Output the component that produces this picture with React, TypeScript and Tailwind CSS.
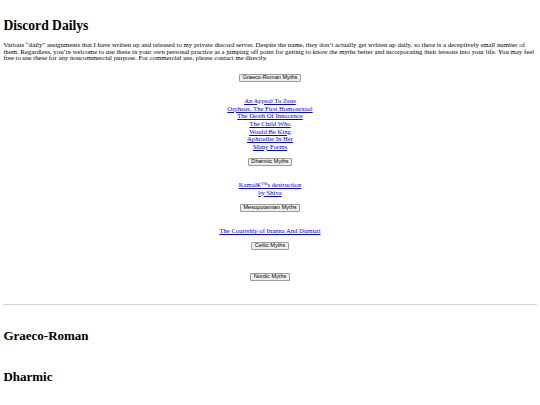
import React from "react";

type Section = {
  name: string;
  links: string[][];
};

const sections: Section[] = [
  {
    name: "Graeco-Roman",
    links: [
      ["An Appeal To Zeus"],
      ["Orpheus, The First Homosexual"],
      ["The Death Of Innocence"],
      ["The Child Who", "Would Be King"],
      ["Aphrodite In Her", "Many Forms"],
    ],
  },
  { name: "Dharmic", links: [["Kamaâ€™s destruction", "by Shiva"]] },
  { name: "Mesopotamian", links: [["The Courtship of Inanna And Dumuzi"]] },
  { name: "Celtic", links: [] },
  { name: "Nordic", links: [] },
];

const App = () => {
  return (
    <div className="min-h-screen bg-white px-[3.4px] pt-[18.4px] font-['Liberation_Serif','Times_New_Roman',serif] text-black">
      <h1 className="text-[13.6px] font-bold leading-[16px]">Discord Dailys</h1>
      <p className="mt-[7.9px] text-[6.78px] leading-[6.5px]">
        Various “daily” assignments that I have written up and released to my private discord server. Despite the
        name, they don’t actually get written up daily, so there is a deceptively small number of them. Regardless,
        you’re welcome to use these in your own personal practice as a jumping off point for getting to know the myths
        better and incorporating their lessons into your life. You may feel free to use these for any noncommercial
        purpose. For commercial use, please contact me directly.
      </p>

      <div className="mt-[12.1px] flex flex-col items-center">
        {sections.map((section) => (
          <div key={section.name} className="flex flex-col items-center">
            <button className="h-[8px] rounded-[1px] border border-[#9a9a9a] bg-[#efefef] px-[2.4px] font-['Liberation_Sans',Arial,sans-serif] text-[5.6px] leading-none text-black">
              {section.name} Myths
            </button>
            <div className="pt-[15px] pb-[7.5px] text-center text-[6.67px] leading-[7.67px]">
              {section.links.map((lines) => (
                <div key={lines.join(" ")}>
                  <a href="#" className="text-[#0000ee] underline">
                    {lines.map((line, i) => (
                      <React.Fragment key={line}>
                        {i > 0 && <br />}
                        {line}
                      </React.Fragment>
                    ))}
                  </a>
                </div>
              ))}
            </div>
          </div>
        ))}
      </div>

      <hr className="mt-[0.5px] border-0 h-px bg-[#d2d2d2]" />

      {/* Full texts of each group */}
      <div className="pt-[23px]">
        {sections.map((section) => (
          <h2 key={section.name} className="mb-[26px] text-[13px] font-bold leading-[15px]">
            {section.name}
          </h2>
        ))}
      </div>
    </div>
  );
};

export default App;
